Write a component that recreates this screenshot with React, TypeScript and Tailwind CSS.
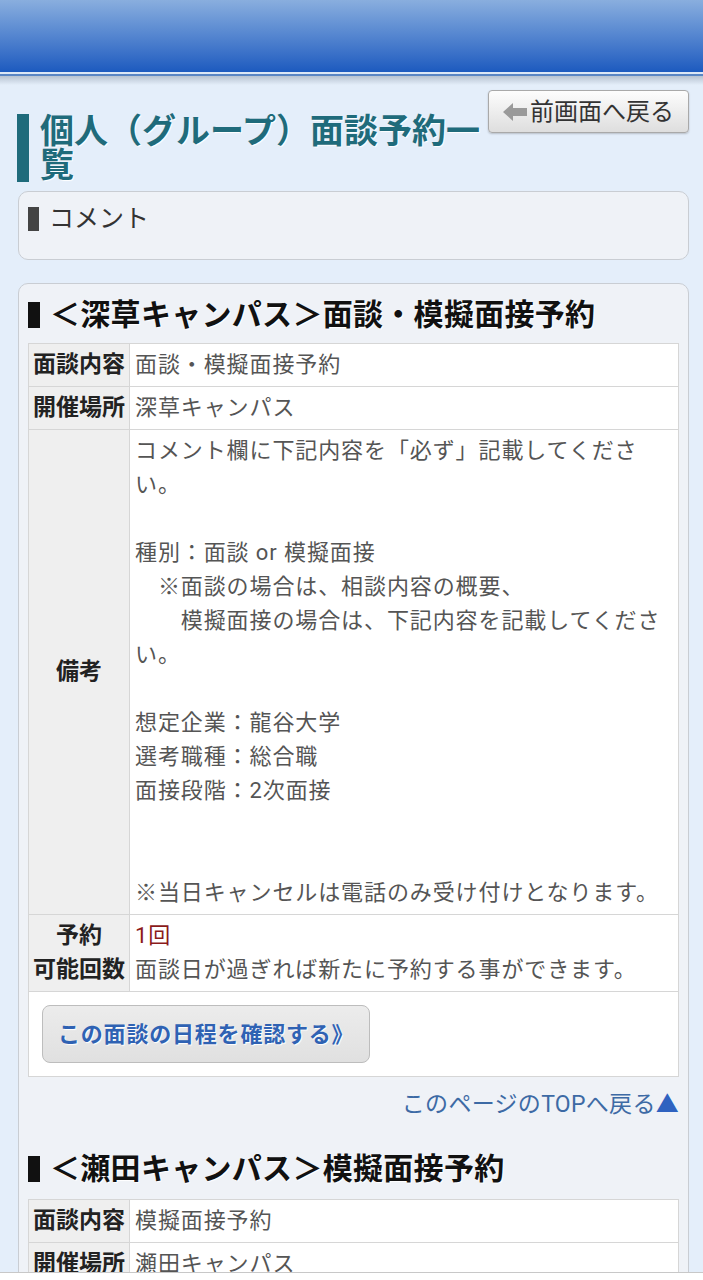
import React from "react";

const rows = [
  { label: "面談内容", value: "面談・模擬面接予約" },
  { label: "開催場所", value: "深草キャンパス" },
];

const noteLines = [
  "コメント欄に下記内容を「必ず」記載してくださ",
  "い。",
  "",
  "種別：面談 or 模擬面接",
  "　※面談の場合は、相談内容の概要、",
  "　　模擬面接の場合は、下記内容を記載してくださ",
  "い。",
  "",
  "想定企業：龍谷大学",
  "選考職種：総合職",
  "面接段階：2次面接",
  "",
  "",
  "※当日キャンセルは電話のみ受け付けとなります。",
];

function SectionHeading({ children }: { children: React.ReactNode }) {
  return (
    <h2 className="flex items-center gap-[10px] text-[30px] font-bold leading-[36px] tracking-[0.3px] text-[#111] [text-shadow:1px_1px_1px_#fff]">
      <span className="inline-block h-[26px] w-[12px] shrink-0 bg-[#111]" />
      {children}
    </h2>
  );
}

function Label({ children, className = "" }: { children: React.ReactNode; className?: string }) {
  return (
    <th
      className={`w-[101px] whitespace-nowrap border border-[#d6d6d6] bg-[#efefef] px-[4px] py-1 text-center align-middle text-[23px] font-bold leading-[34px] text-[#222] ${className}`}
    >
      {children}
    </th>
  );
}

function Value({ children }: { children: React.ReactNode }) {
  return (
    <td className="border border-[#d6d6d6] bg-white px-[5px] py-1 text-left align-top text-[22px] leading-[34px] tracking-[0.9px] text-[#555]">
      {children}
    </td>
  );
}

export default function App() {
  return (
    <div className="min-h-[1280px] bg-[#e4eefa] font-['Roboto','Noto_Sans_CJK_JP',sans-serif]">
      {/* top bar */}
      <div className="h-[72px] bg-gradient-to-b from-[#89aede] to-[#1c5abf]" />
      <div className="h-[2px] bg-[#dce7f6]" />
      <div className="h-[2px] bg-[#5a86c4]" />
      <div className="h-[9px] bg-gradient-to-b from-[#b8c3d1] to-[#e4eefa]" />

      <div className="pl-[17px] pr-[14px] pt-[6px]">
        {/* title + back button */}
        <div className="flex items-start">
          <h1 className="mt-[23px] flex-1 border-l-[12px] border-[#1f6b7b] pl-[11px] text-[34px] font-bold leading-[34px] text-[#1f6b7b] [text-shadow:1px_1px_1px_#fff]">
            個人（グループ）面談予約一覧
          </h1>
          <button className="mt-[-1px] flex h-[43px] w-[201px] shrink-0 items-center gap-[3px] rounded-[4px] border border-[#a9a9a9] bg-gradient-to-b from-[#fdfdfd] to-[#dedede] pl-[14px] text-[24px] leading-none text-[#333] shadow-[0_1px_2px_rgba(0,0,0,0.2)]">
            <svg width="24" height="18" viewBox="0 0 24 18">
              <path d="M0 9 L10 0 V5 H24 V13 H10 V18 Z" fill="#9a9a9a" />
            </svg>
            前画面へ戻る
          </button>
        </div>

        {/* comment box */}
        <div className="ml-px mt-[9px] h-[69px] rounded-[10px] border-[1.5px] border-[#c9cdd3] bg-[#eff2f7] px-[9px] pt-[10px]">
          <div className="flex items-center gap-[10px] text-[25px] leading-[34px] text-[#333]">
            <span className="inline-block h-[24px] w-[11px] bg-[#444]" />
            コメント
          </div>
        </div>

        {/* main card */}
        <div className="ml-px mt-[23px] rounded-[10px] border-[1.5px] border-[#c9cdd3] bg-[#eff2f7] px-[9px] pb-10 pt-[13px]">
          <SectionHeading>＜深草キャンパス＞面談・模擬面接予約</SectionHeading>
          <table className="mt-[10px] w-full border-collapse">
            <tbody>
              {rows.map((r) => (
                <tr key={r.label}>
                  <Label>{r.label}</Label>
                  <Value>{r.value}</Value>
                </tr>
              ))}
              <tr>
                <Label>備考</Label>
                <Value>
                  {noteLines.map((l, i) => (
                    <div key={i} className="h-[34px] whitespace-pre">
                      {l}
                    </div>
                  ))}
                </Value>
              </tr>
              <tr>
                <Label className="leading-[33px]">
                  予約
                  <br />
                  可能回数
                </Label>
                <Value>
                  <div className="text-[#8b1a1a]">1回</div>
                  <div>面談日が過ぎれば新たに予約する事ができます。</div>
                </Value>
              </tr>
              <tr>
                <td colSpan={2} className="border border-[#d6d6d6] bg-white px-[13px] py-[13px]">
                  <button className="h-[58px] rounded-[8px] border border-[#bdbdbd] bg-gradient-to-b from-[#ececec] to-[#e0e0e0] px-[15px] text-[22px] font-bold tracking-[0.8px] text-[#2f62b3] [text-shadow:1px_1px_1px_#fff]">
                    この面談の日程を確認する》
                  </button>
                </td>
              </tr>
            </tbody>
          </table>

          <div className="mt-[12px] text-right text-[23px] leading-[32px] tracking-[0.3px] text-[#3d6aa5]">
            このページのTOPへ戻る<span className="text-[#2f62c0]">▲</span>
          </div>

          <div className="mt-[30px]">
            <SectionHeading>＜瀬田キャンパス＞模擬面接予約</SectionHeading>
          </div>
          <table className="mt-[12px] w-full border-collapse">
            <tbody>
              <tr>
                <Label>面談内容</Label>
                <Value>模擬面接予約</Value>
              </tr>
              <tr>
                <Label>開催場所</Label>
                <Value>瀬田キャンパス</Value>
              </tr>
              <tr>
                <Label>備考</Label>
                <Value>
                  <div className="h-[34px]" />
                </Value>
              </tr>
            </tbody>
          </table>
        </div>
      </div>

      {/* browser bottom strip */}
      <div className="fixed bottom-0 left-0 right-0 h-[8px] border-t border-[#c8c8c8] bg-white" />
    </div>
  );
}
